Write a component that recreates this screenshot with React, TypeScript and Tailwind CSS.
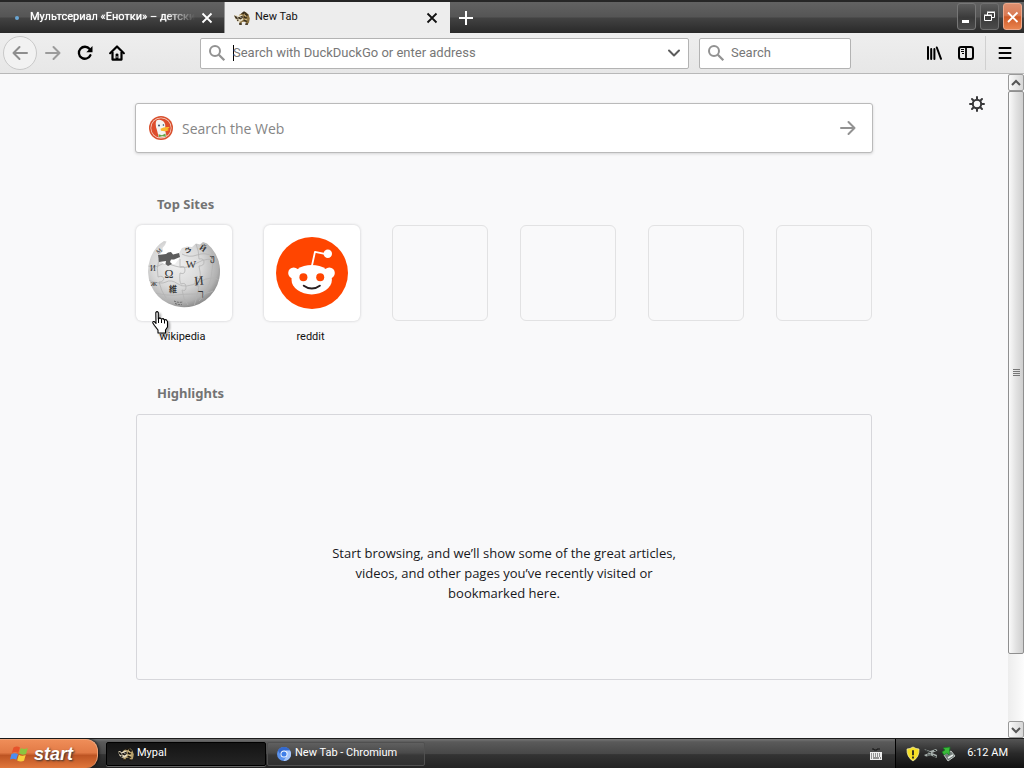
import React from 'react';

const UI = "font-['Roboto','Noto_Sans',sans-serif]";
const CONTENT = "font-['Open_Sans','Noto_Sans',sans-serif]";

function Raccoon({ dark }: { dark?: boolean }) {
  const line = dark ? '#1b1712' : '#3a2f1d';
  return (
    <svg width="16" height="16" viewBox="0 0 16 16" aria-hidden="true" className="shrink-0">
      <path d="M5 5 8 3 12 2.2 14.5 4.5 15.8 8.5 15 12.5 13.4 14.4 11.8 13.6 11.6 11.6 8 12 7.2 14.4 5.4 14 5.6 11Z" fill={dark ? '#b8a16b' : '#8d7443'} />
      <path d="M0 5.5 2 5 3.5 6.2 6.5 4.8 8.8 5.2 8.4 7.2 9.6 9.5 7 11.6 4 11.8 1.4 9.6Z" fill="#e6dcc0" />
      <path d="M0 5.2 2.2 6.6 5 7.2 8.6 5.4 8.8 8 6.5 9.4 4.4 8.4 2 9 1 7.6Z" fill={line} />
      <path d="M7 3.6 10 1.2 12 2.4 9.4 4.2Z M11.5 2.5 14.6 5 12.8 6 10.6 4.4Z M10 6 13.2 7.6 12 8.8 9.6 8Z" fill={line} />
      <path d="M10 9.6 13.6 11 12.4 12 9.4 11Z M5.4 13 8 13.4 7.6 15 5 14.8Z M11.6 13.2 14.2 13.4 13.6 15 11 14.8Z" fill={line} />
      <path d="M10.2 4.8 12 6.3M10.5 9 13.2 9.9" stroke="#e2cf9b" strokeWidth=".9" />
      <path d="M2.8 9.4 4.6 9.4 4.4 11 3.4 11.2Z" fill={line} />
      <path d="M3.2 7.3h1M6.4 7.4h1" stroke="#fff" strokeWidth=".8" />
    </svg>
  );
}

function Cross() {
  return (
    <svg width="12" height="12" viewBox="0 0 12 12" fill="none" stroke="currentColor" strokeWidth="1.8" aria-hidden="true">
      <path d="M1.5 1.5 10.5 10.5M10.5 1.5 1.5 10.5" />
    </svg>
  );
}

function Magnifier() {
  return (
    <svg width="18" height="18" viewBox="0 0 18 18" fill="none" stroke="#929292" aria-hidden="true" className="shrink-0">
      <circle cx="7" cy="7" r="5" strokeWidth="2" />
      <path d="M10.8 10.8 16.3 16.3" strokeWidth="2.3" />
    </svg>
  );
}

function Arrow({ flip }: { flip?: boolean }) {
  return (
    <svg width="16" height="16" viewBox="0 0 16 16" fill="none" stroke="currentColor" strokeWidth="2" strokeLinecap="round" strokeLinejoin="round" aria-hidden="true">
      <path d={flip ? 'M15 8H1.5M7.5 2 1.5 8 7.5 14' : 'M1 8H14.5M8.5 2 14.5 8 8.5 14'} />
    </svg>
  );
}

function TitleBar() {
  const frame = 'flex h-[27px] w-[19px] items-center justify-center rounded-[3px] border';
  return (
    <header className="flex h-[33px] shrink-0 border-t-2 border-[#262626] bg-[linear-gradient(#626262,#555_48%,#424242_52%,#292929)] text-[11px]">
      <div className="flex w-[225px] items-center border-r border-[#999] pr-[11px] text-white">
        <svg width="6" height="6" viewBox="0 0 6 6" aria-hidden="true" className="ml-[14px] mr-[10px] shrink-0">
          <circle cx="3" cy="3" r="2" fill="#69a6d4" />
        </svg>
        <span className="whitespace-nowrap [mask-image:linear-gradient(90deg,#000_82%,transparent)] [text-shadow:0_0_1px_#fff]">
          Мультсериал «Енотки» – детски
        </span>
        <button aria-label="Close tab" className="ml-auto"><Cross /></button>
      </div>
      <div className="flex w-[225px] items-center bg-[#ededed] pl-[9px] pr-[12px] text-[#111]">
        <Raccoon />
        <span className="ml-[5px]">New Tab</span>
        <button aria-label="Close tab" className="ml-auto"><Cross /></button>
      </div>
      <button aria-label="Open a new tab" className="ml-[9px] text-white">
        <svg width="14" height="14" viewBox="0 0 14 14" fill="none" stroke="currentColor" strokeWidth="2" aria-hidden="true">
          <path d="M7 0v14M0 7h14" />
        </svg>
      </button>
      <div className="ml-auto flex items-start gap-1 pr-[2px] pt-px text-white">
        <button aria-label="Minimize" className={`${frame} border-[#777] bg-[linear-gradient(#5d5d5d,#3a3a3a_55%,#4b4b4b)]`}>
          <svg width="17" height="20" viewBox="0 0 17 20" aria-hidden="true"><path d="M4 13h7v3H4z" fill="#fff" /></svg>
        </button>
        <button aria-label="Restore" className={`${frame} border-[#707070] bg-[linear-gradient(#5d5d5d,#3a3a3a_55%,#4b4b4b)]`}>
          <svg width="17" height="20" viewBox="0 0 17 20" fill="none" stroke="#fff" aria-hidden="true">
            <path d="M6.5 8V5.5h7v5H11M6 5h8" />
            <path d="M3.5 8.5h7v5h-7zM3 8h8" />
          </svg>
        </button>
        <button aria-label="Close window" className={`${frame} border-[#eca98c] bg-[linear-gradient(#dd8f70,#d97a54_45%,#cf5a28_52%,#e98450)]`}>
          <svg width="17" height="20" viewBox="0 0 17 20" fill="none" stroke="#fff" strokeWidth="1.8" aria-hidden="true"><path d="M4 5.5l9.5 9.5M13.5 5.5 4 15" /></svg>
        </button>
      </div>
    </header>
  );
}

function Toolbar() {
  return (
    <nav className="flex h-[41px] shrink-0 items-center border-b border-[#b8b8b8] bg-[linear-gradient(#eeeeee,#e7e7e7)] text-[13px]">
      <button aria-label="Back" className="ml-[3px] flex size-[34px] items-center justify-center rounded-full border border-[#c9c9c9] bg-[#f2f2f2] text-[#8e8e8e]">
        <Arrow flip />
      </button>
      <div className="ml-2 flex gap-4 text-black">
        <button aria-label="Forward" className="text-[#9b9b9b]"><Arrow /></button>
        <button aria-label="Reload">
          <svg width="16" height="16" viewBox="0 0 16 16" aria-hidden="true">
            <path d="M13.4 10.2A6 6 0 1 1 12.6 4" fill="none" stroke="#000" strokeWidth="2.3" strokeLinecap="round" />
            <path d="M15.5 1v6.2H9.3Z" fill="#000" />
          </svg>
        </button>
        <button aria-label="Home">
          <svg width="16" height="16" viewBox="0 0 16 16" aria-hidden="true">
            <path d="M1.2 8.2 8 1.5 14.8 8.2" fill="none" stroke="#000" strokeWidth="2.2" strokeLinecap="round" strokeLinejoin="round" />
            <path d="M3.5 7v7.6h9V7" fill="none" stroke="#000" strokeWidth="2.2" strokeLinejoin="round" />
            <path d="M6.6 15V9.5q0-1 1.4-1t1.4 1V15Z" fill="#000" />
            <path d="M8 11.2v1.5" stroke="#eee" />
          </svg>
        </button>
      </div>
      <form className="ml-[75px] flex h-[31px] flex-1 items-center rounded-[2px] border border-[#b3b3b3] bg-white pl-[7px] pr-[7px]">
        <Magnifier />
        <span className="ml-[7px] h-4 w-px bg-black" />
        <input aria-label="Address" placeholder="Search with DuckDuckGo or enter address" className="-ml-px min-w-0 flex-1 outline-none placeholder:text-[#777]" />
        <button type="button" aria-label="Show history">
          <svg width="14" height="14" viewBox="0 0 14 14" fill="none" stroke="#5c5c5c" strokeWidth="2" strokeLinecap="round" strokeLinejoin="round" aria-hidden="true"><path d="M2 4.5 7 9.5 12 4.5" /></svg>
        </button>
      </form>
      <form className="ml-[10px] flex h-[31px] w-[152px] items-center rounded-[2px] border border-[#b3b3b3] bg-white pl-[7px]">
        <Magnifier />
        <input aria-label="Search" placeholder="Search" className="ml-[6px] min-w-0 flex-1 outline-none placeholder:text-[#777]" />
      </form>
      <div className="ml-[75px] flex h-full items-center gap-4">
        <button aria-label="Library">
          <svg width="16" height="16" viewBox="0 0 16 16" fill="none" stroke="#000" strokeWidth="2" strokeLinecap="round" aria-hidden="true"><path d="M2 2v12M5.2 4v10M8.4 4v10M10.8 2.5 15 13.8" /></svg>
        </button>
        <button aria-label="Sidebars">
          <svg width="16" height="16" viewBox="0 0 16 16" fill="none" stroke="#000" aria-hidden="true">
            <rect x="1" y="2" width="14" height="12" rx="2" strokeWidth="2" />
            <path d="M8 2v12" strokeWidth="1.8" /><path d="M3 4.5h3M3 6.5h3M4 8.5h2" />
          </svg>
        </button>
      </div>
      <div className="ml-[11px] h-[34px] w-px bg-[#d0d0d0]" />
      <button aria-label="Menu" className="ml-[11px] mr-[11px]">
        <svg width="16" height="16" viewBox="0 0 16 16" stroke="#000" strokeWidth="2" strokeLinecap="round" aria-hidden="true"><path d="M2.5 3h11M2.5 8h11M2.5 13h11" /></svg>
      </button>
    </nav>
  );
}

function Wikipedia() {
  return (
    <svg width="76" height="76" viewBox="0 0 76 76" aria-hidden="true">
      <defs>
        <radialGradient id="globe" cx=".4" cy=".36" r=".7">
          <stop offset="0" stopColor="#efefef" /><stop offset=".5" stopColor="#d9d9d9" /><stop offset=".82" stopColor="#b0b0b0" /><stop offset="1" stopColor="#7c7c7c" />
        </radialGradient>
        <clipPath id="globeclip">
          <path d="M18 6 20.5 6.5 19 10 16.5 13 17 16 12.5 21 13 25 18 29 29 29 33 24 33 18 36 13 41 11.5 46 12 50 8.5 54 9.5 57 7 61 8.5A36 36 0 1 1 4 24.5Q8 12 18 6Z" />
        </clipPath>
      </defs>
      <path d="M18 6 20.5 6.5 19 10 16.5 13 17 16 12.5 21 13 25 18 29 29 29 33 24 33 18 36 13 41 11.5 46 12 50 8.5 54 9.5 57 7 61 8.5A36 36 0 1 1 4 24.5Q8 12 18 6Z" fill="url(#globe)" />
      <g clipPath="url(#globeclip)" fill="none" stroke="#b4b4b4" strokeWidth=".8">
        <path d="M13 24q-3 10-1 18 5-2 6 2-2 4-5 3 2 9 7 16M34 24v8q5-2 5 3t-5 3q-1 8 1 11 5-2 5 3t-4 3q1 9 6 15M50 9q3 7 3 15 5-1 5 3t-5 4q2 8 1 13-5-2-5 3t4 4q-1 9-5 20M66 17q2 12-1 26-3 14-12 23" />
        <path d="M2 31q8 2 12-1t15 1 22-3 22-1M2 45q13 5 18 2t12 2 21-2 20-2M9 58q14 3 21 2t19-1 18-3M36 19q7 4 15 1t15 1" />
      </g>
      <path d="M12 20 20 19 22 17.5 25 17 27 19.5 33 18 34 22 28 24.5 25 24.5 24 27 26 29 22 31 19.5 29 20 26 13 27Z" fill="#5d5d5d" />
      <g className="font-['Liberation_Serif','Noto_Sans_CJK_JP',serif]" textAnchor="middle" fill="#333">
        <text x="23" y="43" fontSize="12">Ω</text><text x="45" y="33" fontSize="11">W</text>
        <text x="53" y="50" fontSize="13" transform="rotate(-6 53 45)">И</text><text x="27" y="57" fontSize="8" fontWeight="bold">維</text>
        <text x="42" y="18" fontSize="7" fontWeight="bold" transform="rotate(12 42 15)">ウ</text><text x="57" y="16" fontSize="8" fontWeight="bold" transform="rotate(35 57 13)">Й</text>
        <text x="66" y="26" fontSize="9">უ</text><text x="55" y="63" fontSize="12">ר</text>
        <text x="7" y="36" fontSize="8">И</text><text x="8" y="51" fontSize="7">Ж</text><text x="13" y="18" fontSize="6" transform="rotate(-40 13 16)">M</text>
      </g>
      <path d="M28 66q4 2 9 1M29 68.500q4 1.500 7 1" fill="none" stroke="#666" strokeDasharray="2 1" />
    </svg>
  );
}

function Reddit() {
  return (
    <svg width="72" height="72" viewBox="0 0 72 72" aria-hidden="true">
      <circle cx="36" cy="36" r="36" fill="#ff4500" />
      <g fill="#fff">
        <circle cx="17.7" cy="36" r="5.5" /><circle cx="53.3" cy="36" r="5.5" />
        <ellipse cx="35.7" cy="42.7" rx="20.2" ry="14.7" /><circle cx="51.8" cy="16.7" r="4.2" />
      </g>
      <path d="M36 28.5 39 14.8 50 17.2" fill="none" stroke="#fff" strokeWidth="1.8" strokeLinejoin="round" />
      <g fill="#ff4500"><circle cx="27.4" cy="40.2" r="4" /><circle cx="44.2" cy="40.2" r="4" /></g>
      <path d="M27.8 48.7q8 5.8 16 0" fill="none" stroke="#271f20" strokeWidth="2" strokeLinecap="round" />
    </svg>
  );
}

function Duck() {
  return (
    <svg width="24" height="24" viewBox="0 0 24 24" aria-hidden="true" className="shrink-0">
      <circle cx="12" cy="12" r="12" fill="#d9512f" /><circle cx="12" cy="12" r="10.5" fill="#f5d8ce" /><circle cx="12" cy="12" r="9.8" fill="#de4d2c" />
      <path d="M7.5 4.5Q10 2.8 13 4.5 16.6 6.4 16.3 11L16 14Q16.8 17 17.5 20Q13.5 22.4 9.8 21.2L7.7 13.2Q5.8 8 7.5 4.500Z" fill="#f4f4f2" />
      <circle cx="10" cy="9.500" r=".9" fill="#24435d" /><circle cx="14.4" cy="9" r=".8" fill="#24435d" />
      <path d="M11.5 12.7Q15 10.5 20 11 21.3 11.6 18.4 13L20 14Q17 16 12 14.8Z" fill="#fbb82e" />
      <path d="M9.500 18.2 13 19.3 16.5 17.6 16.8 20.7 13.3 20.2 10 21Z" fill="#65a546" />
    </svg>
  );
}

function Cursor() {
  return (
    <svg width="20" height="25" viewBox="0 0 20 25" aria-hidden="true" className="pointer-events-none absolute left-4 top-[86px] drop-shadow-[2px_2px_1px_rgba(0,0,0,0.35)]">
      <path d="M3.800 1.5Q5-.3 6.300 1.500V8L8 6.800 9.500 8.200 11 7.500 12.500 9 14 8.500 15.500 10.500V16L13.500 19V22H6V19L2.500 14.500.8 12Q.6 10 2.300 10.600L4 12.500Z" fill="#fff" stroke="#000" strokeWidth="1.1" strokeLinejoin="round" />
      <path d="M6.500 8v4M9.500 8.400V12M12.500 9v3.500" stroke="#000" />
    </svg>
  );
}

const sites: { name: string; logo: React.ReactNode }[] = [
  { name: 'wikipedia', logo: <Wikipedia /> },
  { name: 'reddit', logo: <Reddit /> },
];

function NewTabPage() {
  const heading = "pl-[21px] font-['Noto_Sans',sans-serif] text-[13px] font-bold leading-5 text-[#737373]";
  return (
    <main className={`relative min-w-0 flex-1 bg-[#f9f9fa] ${CONTENT}`}>
      <button aria-label="Customize your New Tab page" className="absolute right-[23px] top-[22px]">
        <svg width="16" height="16" viewBox="0 0 16 16" fill="none" stroke="#38383a" strokeLinecap="round" aria-hidden="true">
          <circle cx="8" cy="8" r="4.200" strokeWidth="2" />
          <path d="M8 1V3.500M8 12.500V15M1 8H3.500M12.500 8H15M3 3 4.700 4.700M11.300 11.300 13 13M3 13 4.700 11.300M11.300 4.700 13 3" strokeWidth="2" />
        </svg>
      </button>
      <div className="mx-auto w-[736px] max-w-full pt-[29px]">
        <form className="-mx-px flex h-[50px] items-center rounded-[3px] border border-[#bababa] bg-white pl-[13px] pr-4 shadow-[0_1px_3px_rgba(0,0,0,0.15)]">
          <Duck />
          <input aria-label="Search the Web" placeholder="Search the Web" className="ml-[9px] min-w-0 flex-1 text-[14px] outline-none placeholder:text-[#858585]" />
          <button type="button" aria-label="Search" className="text-[#929292]"><Arrow /></button>
        </form>

        <section className="mt-[41px]">
          <h2 className={heading}>Top Sites</h2>
          <ul className="mt-[11px] grid grid-cols-6 gap-8">
            {sites.map((s, i) => (
              <li key={s.name} className="relative">
                <a href={'#' + s.name} className={`block text-center text-[11px] leading-4 text-[#111] ${UI}`}>
                  <span className="flex h-24 items-center justify-center rounded-[6px] bg-white shadow-[0_0_3px_rgba(12,12,13,0.2)]">{s.logo}</span>
                  <span className="mt-2 block pr-[3px]">{s.name}</span>
                </a>
                {i === 0 && <Cursor />}
              </li>
            ))}
            {[2, 3, 4, 5].map((n) => (
              <li key={n} className="h-24 rounded-[6px] border border-[#e2e2e3]" />
            ))}
          </ul>
        </section>

        <section className="mt-[38px]">
          <h2 className={heading}>Highlights</h2>
          <div className="mt-[11px] flex h-[266px] justify-center rounded-[3px] border border-[#d7d7db] pt-[128px]">
            <p className="w-[350px] text-center text-[13px] leading-5 text-[#18181b]">
              Start browsing, and we’ll show some of the great articles, videos, and other pages you’ve recently visited or bookmarked here.
            </p>
          </div>
        </section>
      </div>
    </main>
  );
}

function ScrollBar() {
  const btn = 'flex h-[17px] w-full shrink-0 items-center justify-center rounded-[2px] border border-[#999] bg-[linear-gradient(90deg,#fafafa,#d6d6d6)]';
  return (
    <div className="flex w-4 shrink-0 flex-col bg-[linear-gradient(90deg,#ededed,#fcfcfc)]">
      <button aria-label="Scroll up" className={btn}>
        <svg width="10" height="8" viewBox="0 0 10 8" fill="none" stroke="#555" strokeWidth="2" aria-hidden="true"><path d="M1 6 5 2 9 6" /></svg>
      </button>
      <div className="flex flex-1 flex-col pb-[67px]">
        <div className="flex flex-1 items-center justify-center rounded-[2px] border border-[#8f8f8f] bg-[linear-gradient(90deg,#fafafa,#e2e2e2_50%,#cfcfcf)]">
          <svg width="7" height="8" viewBox="0 0 7 8" stroke="#777" aria-hidden="true"><path d="M0 .5h7M0 2.5h7M0 4.5h7M0 6.5h7" /></svg>
        </div>
      </div>
      <button aria-label="Scroll down" className={btn}>
        <svg width="10" height="8" viewBox="0 0 10 8" fill="none" stroke="#555" strokeWidth="2" aria-hidden="true"><path d="M1 2 5 6 9 2" /></svg>
      </button>
    </div>
  );
}

function TaskBar() {
  return (
    <footer className="flex h-[30px] shrink-0 border-t border-[#1c1c1c] bg-[linear-gradient(#777,#5a5a5a_10%,#484848_50%,#333_54%,#242424)] text-[11px] text-white">
      <button className="flex w-[98px] items-center rounded-r-[12px] border-r border-t border-[#f0a377] bg-[linear-gradient(#ef8d58,#e27a46_45%,#bd5423_55%,#e0773c)] pl-[10px] shadow-[1px_0_3px_#111]">
        <svg width="19" height="18" viewBox="0 0 19 18" aria-hidden="true">
          <path d="M3.5 2.5Q7 .5 10 2.500L8.200 8Q5.500 6.200 1.800 8Z" fill="#e6532b" /><path d="M10.800 3Q14 4.800 17.800 3L16 9Q12.400 10.500 9.200 8.600Z" fill="#8cc53f" />
          <path d="M1.500 9Q5 7.400 8 9.200L6.200 14.800Q3.500 13 0 14.500Z" fill="#4d8df0" /><path d="M8.800 9.800Q12 11.500 15.700 10L14 15.800Q10.400 17.200 7.200 15.400Z" fill="#f8cf3c" />
        </svg>
        <span className="ml-[5px] font-['Liberation_Sans',sans-serif] text-[18px] font-bold italic leading-5 [text-shadow:1px_1px_2px_#333]">start</span>
      </button>
      <div className="ml-2 flex items-center gap-px">
        <button className="flex h-6 w-[160px] items-center rounded-[2px] border border-black bg-[linear-gradient(#141414,#242424)] pl-[11px] shadow-[0_1px_0_#666]">
          <Raccoon dark /><span className="ml-[3px]">Mypal</span>
        </button>
        <button className="flex h-6 w-[158px] items-center rounded-[2px] border border-[#505050] bg-[linear-gradient(#606060,#4a4a4a_45%,#383838_55%,#303030)] pl-[9px]">
          <svg width="14" height="14" viewBox="0 0 14 14" aria-hidden="true">
            <circle cx="7" cy="7" r="7" fill="#5c93ec" /><path d="M.9 3.5A7 7 0 0 1 13.1 3.5H7L4 8.5Z" fill="#3469cd" /><path d="M13.1 3.5A7 7 0 0 1 6.5 14L10 8.5 9 3.5Z" fill="#a7c6fa" />
            <circle cx="7" cy="7" r="3.5" fill="#fff" /><circle cx="7" cy="7" r="2.6" fill="#3f7ee8" />
          </svg>
          <span className="ml-1">New Tab - Chromium</span>
        </button>
      </div>
      <div className="ml-auto flex items-center">
        <svg width="12" height="12" viewBox="0 0 12 12" aria-hidden="true" className="mr-[13px]">
          <path d="M2 1h2v1h3V1h3" fill="none" stroke="#151515" /><path d="M0 4h12v8H0z" fill="#eee" />
          <path d="M1 6h10M1 8h10M1 10h1M10 10h1" stroke="#333" strokeDasharray="1 1" /><path d="M3 10h6" stroke="#333" />
        </svg>
        <div className="flex h-full w-[129px] items-center gap-[2px] border-l border-black bg-[linear-gradient(#555,#292929_50%,#111)] pl-[9px]">
          <svg width="16" height="16" viewBox="0 0 16 16" aria-hidden="true"><path d="M8 1Q11 3 14 3 14.5 11 8 15 1.5 11 2 3 5 3 8 1Z" fill="#f5df25" stroke="#f7f2b0" strokeWidth=".7" /><path d="M8 4.2v5M8 10.5v2" stroke="#222" strokeWidth="1.8" /></svg>
          <svg width="16" height="16" viewBox="0 0 16 16" aria-hidden="true"><path d="M1 3 7 5 13 3 14.5 4.5 9 7 14 9 13.5 12 8 9.5 3 10.5 1 9 6 7Z" fill="#a7b0ad" /><path d="M3 4.5 8 7M4 9h4M10 9.5 13 11M11 4.5h2" stroke="#303634" strokeWidth="1.1" /></svg>
          <svg width="16" height="16" viewBox="0 0 16 16" aria-hidden="true"><path d="M3 9 10 5 14 10 7 15Z" fill="#737d7a" stroke="#bdc5c1" /><path d="M7 12 12 9" stroke="#e9eeeb" strokeWidth="1.5" /><path d="M9 1 8 9 6 7 3 9 1 6 4 4 2 2Z" fill="#39bb39" stroke="#167e21" strokeWidth=".7" /></svg>
          <time className="ml-auto mr-4 whitespace-nowrap">6:12 AM</time>
        </div>
      </div>
    </footer>
  );
}

export default function App() {
  return (
    <div className={`flex min-h-screen flex-col bg-[#f9f9fa] ${UI}`}>
      <TitleBar />
      <Toolbar />
      <div className="flex flex-1"><NewTabPage /><ScrollBar /></div>
      <TaskBar />
    </div>
  );
}
